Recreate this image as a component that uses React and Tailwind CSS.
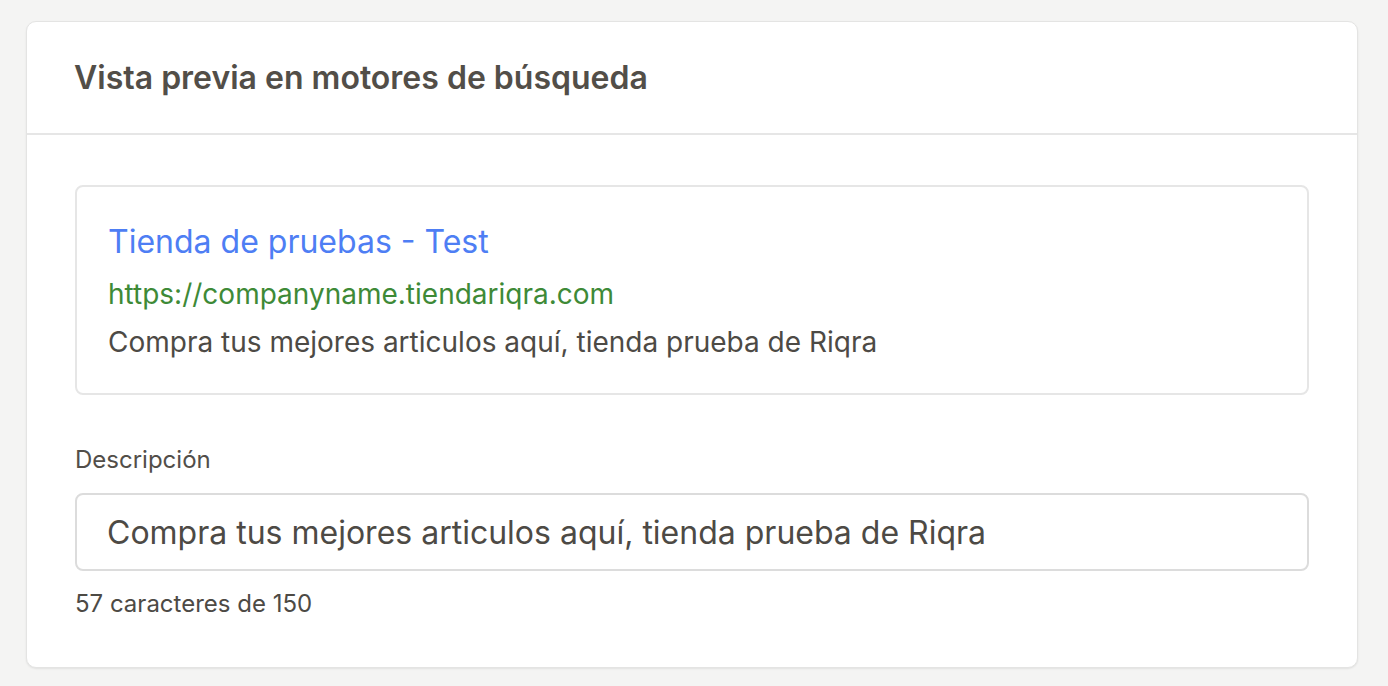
import React, { useState } from "react";

function App() {
  const [description, setDescription] = useState(
    "Compra tus mejores articulos aquí, tienda prueba de Riqra"
  );

  return (
    <div
      className="min-h-screen bg-[#f4f4f3] pt-[21px] pl-[26px] pr-[30px] pb-[18px]"
      style={{ fontFamily: "Inter, 'Noto Sans', sans-serif" }}
    >
      <div className="bg-white border border-[#e4e4e3] rounded-[10px] shadow-[0_1px_2px_rgba(0,0,0,0.08)]">
        {/* Header */}
        <div className="h-[113px] flex items-center px-[47px] border-b-2 border-[#e6e6e6]">
          <h1 className="text-[32px] font-semibold text-[#524e48]">
            Vista previa en motores de búsqueda
          </h1>
        </div>

        <div className="px-[48px] pt-[50px] pb-[47px]">
          {/* Search preview */}
          <div className="border-2 border-[#e6e6e6] rounded-[8px] px-[31px] pt-[35px] pb-[33px]">
            <p className="text-[32px] leading-[40px] text-[#4e7ef4]">
              Tienda de pruebas - Test
            </p>
            <p className="mt-[14px] text-[28px] leading-[36px] text-[#3e8a37]">
              https://companyname.tiendariqra.com
            </p>
            <p className="mt-[12px] text-[28px] leading-[36px] text-[#4d4a45]">
              {description}
            </p>
          </div>

          {/* Description field */}
          <label className="block mt-[49px] text-[24px] leading-[32px] text-[#524e49]">
            Descripción
          </label>
          <input
            type="text"
            value={description}
            maxLength={150}
            onChange={(e) => setDescription(e.target.value)}
            className="mt-[17px] w-full h-[78px] px-[30px] border-2 border-[#dcdcdc] rounded-[8px] text-[32px] text-[#4d4a45] outline-none"
          />
          <p className="mt-[17px] text-[24px] leading-[32px] text-[#4d4a45]">
            {description.length} caracteres de 150
          </p>
        </div>
      </div>
    </div>
  );
}

export default App;
